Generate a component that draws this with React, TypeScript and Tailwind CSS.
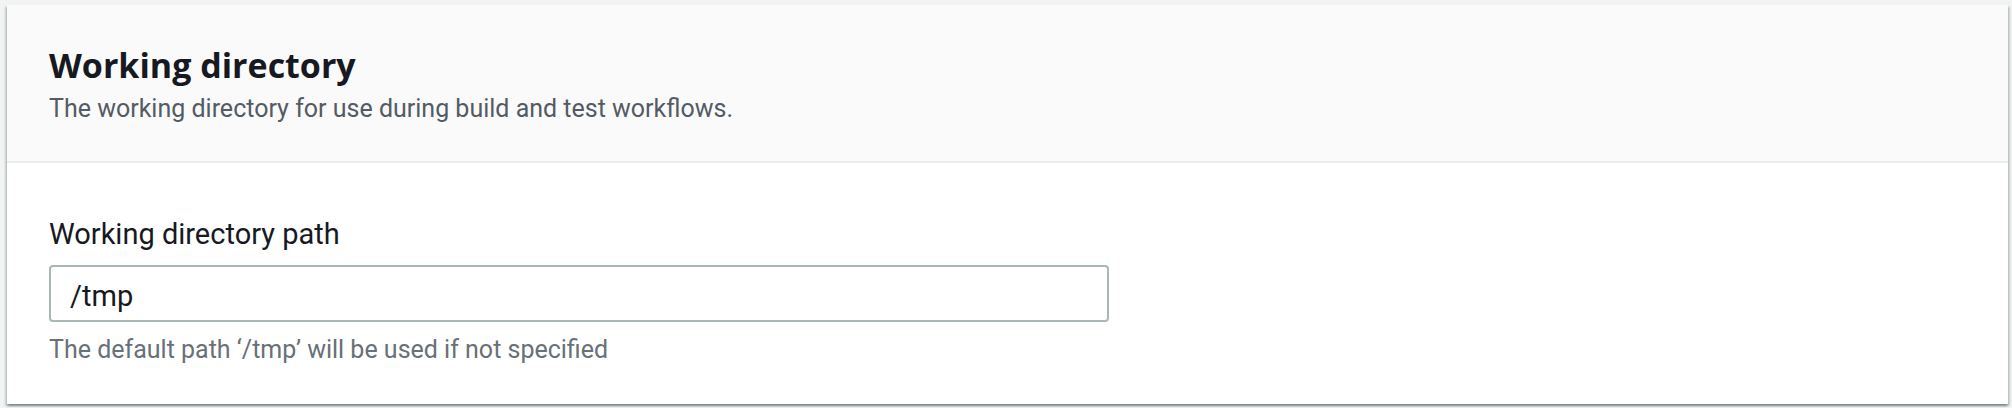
export default function App() {
  return (
    <div className="h-[408px] w-full bg-[#f2f3f3] pl-[7px] pr-[4px] pt-[5px] font-['Roboto',sans-serif]">
      <div className="flex h-[399px] flex-col bg-white shadow-[0_2px_2px_0_rgba(0,28,36,0.3),2px_2px_2px_0_rgba(0,28,36,0.15),-2px_2px_2px_0_rgba(0,28,36,0.15)]">
        {/* Header */}
        <div className="border-b-2 border-[#eaeded] bg-[#fafafa] pl-[42px] pt-[38px] pb-[35px]">
          <h2 className="font-['Open_Sans',sans-serif] text-[34px] font-bold leading-[44px] text-[#16191f]">
            Working directory
          </h2>
          <p className="mt-[5px] text-[25px] leading-[34px] text-[#545b64]">
            The working directory for use during build and test workflows.
          </p>
        </div>

        {/* Body */}
        <div className="flex flex-col pl-[42px] pt-[53px]">
          <label className="text-[29px] leading-[37px] text-[#16191f]">Working directory path</label>
          <input
            readOnly
            defaultValue="/tmp"
            className="mt-[12px] h-[57px] w-[1060px] rounded-[4px] border-2 border-[#aab7b8] bg-white pl-[19px] pt-[5px] font-['Roboto',sans-serif] text-[29px] text-[#16191f] outline-none"
          />
          <p className="mt-[11px] text-[25px] leading-[33px] text-[#687078]">
            The default path ‘/tmp’ will be used if not specified
          </p>
        </div>
      </div>
    </div>
  );
}
